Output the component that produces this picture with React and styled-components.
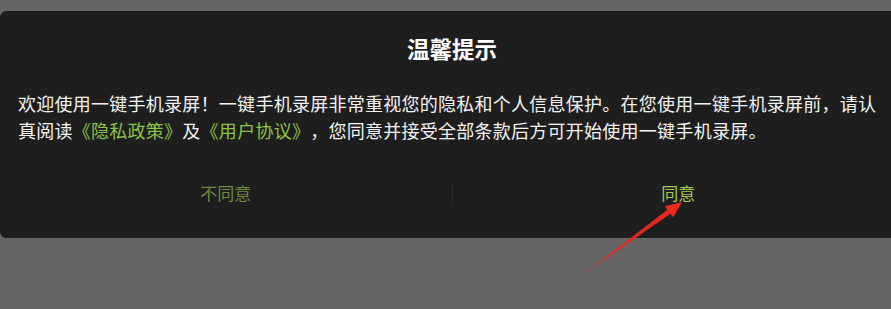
import React from 'react';
import styled, { createGlobalStyle } from 'styled-components';

const GlobalStyle = createGlobalStyle`
  html, body {
    margin: 0;
    padding: 0;
    background: #666666;
  }
  body {
    font-family: 'Noto Sans CJK SC', 'Noto Sans', sans-serif;
  }
`;

const Screen = styled.div`
  position: relative;
  height: 309px;
  padding-top: 11px;
  box-sizing: border-box;
  overflow: hidden;
  background: #666666;
`;

const Dialog = styled.div`
  width: 904px;
  height: 227px;
  background: #1e1e1e;
  border-radius: 6px;
  display: flex;
  flex-direction: column;
`;

const Title = styled.div`
  padding-top: 25px;
  font-size: 22.5px;
  line-height: 24px;
  font-weight: 700;
  color: #ffffff;
  text-align: center;
`;

const Message = styled.p`
  margin: 30px 0 0;
  padding: 0 18px;
  font-size: 18px;
  letter-spacing: 0.26px;
  line-height: 27px;
  color: #f4f4f4;
  text-spacing-trim: space-all;
`;

const Link = styled.span`
  color: #8cc348;
`;

const Actions = styled.div`
  margin-top: 24px;
  height: 50px;
  display: grid;
  grid-template-columns: 1fr auto 1fr;
  align-items: center;
`;

const ActionButton = styled.button`
  background: none;
  border: none;
  padding: 0;
  font-family: inherit;
  font-size: 17px;
  line-height: 24px;
  color: ${(p) => (p.$primary ? '#9dcb52' : '#6b8a3c')};
  cursor: pointer;
`;

const Divider = styled.div`
  width: 1px;
  height: 18px;
  background: #303030;
`;

const Overlay = styled.svg`
  position: absolute;
  left: 0;
  top: 0;
  pointer-events: none;
`;

function Arrow() {
  return (
    <Overlay width="891" height="309" viewBox="0 0 891 309">
      <defs>
        <linearGradient id="arrowFade" x1="573" y1="282" x2="682" y2="202" gradientUnits="userSpaceOnUse">
          <stop offset="0" stopColor="#e8281e" stopOpacity="0" />
          <stop offset="0.35" stopColor="#e8281e" stopOpacity="0.85" />
          <stop offset="1" stopColor="#ee2a1e" />
        </linearGradient>
      </defs>
      <polygon
        fill="url(#arrowFade)"
        points="573,282 670.3,213.8 673.3,217.2 682,202 664.9,206.2 667.4,209.7"
      />
    </Overlay>
  );
}

export default function App() {
  return (
    <>
      <GlobalStyle />
      <Screen>
        <Dialog>
          <Title>温馨提示</Title>
          <Message>
            欢迎使用一键手机录屏！一键手机录屏非常重视您的隐私和个人信息保护。在您使用一键手机录屏前，请认真阅读
            <Link>《隐私政策》</Link>及<Link>《用户协议》</Link>，您同意并接受全部条款后方可开始使用一键手机录屏。
          </Message>
          <Actions>
            <ActionButton>不同意</ActionButton>
            <Divider />
            <ActionButton $primary>同意</ActionButton>
          </Actions>
        </Dialog>
        <Arrow />
      </Screen>
    </>
  );
}
